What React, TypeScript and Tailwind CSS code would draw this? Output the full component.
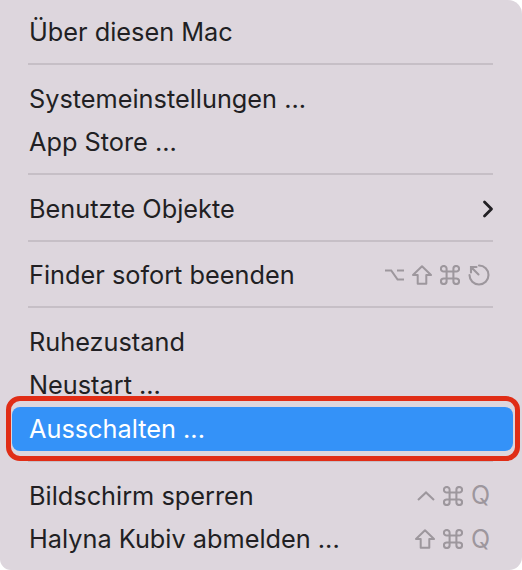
import React from 'react';

const GREY = '#9d979d';

const OptionKey = () => (
  <svg width="19" height="12" viewBox="0 0 19 12" fill="none" stroke={GREY} strokeWidth="2.1">
    <path d="M0 1.5 H6.2 L12.6 10.5 H19 M12 1.5 H19" />
  </svg>
);

const ShiftKey = () => (
  <svg width="20" height="20" viewBox="0 0 20 20" fill="none" stroke={GREY} strokeWidth="2" strokeLinejoin="round">
    <path d="M10 1.2 L19 10 H14.3 V18.8 H5.7 V10 H1 Z" />
  </svg>
);

const CommandKey = () => (
  <svg width="20" height="20" viewBox="1.2 1.2 17.6 17.6" fill="none" stroke={GREY} strokeWidth="1.8">
    <path d="M7 7 V4.5 A2.5 2.5 0 1 0 4.5 7 H15.5 A2.5 2.5 0 1 0 13 4.5 V15.5 A2.5 2.5 0 1 0 15.5 13 H4.5 A2.5 2.5 0 1 0 7 15.5 Z" />
  </svg>
);

const EscapeKey = () => (
  <svg width="22" height="22" viewBox="0 0 22 22" fill="none" stroke={GREY} strokeWidth="2.1" strokeLinecap="round">
    <path d="M11 1.5 A9.5 9.5 0 1 1 1.5 11" />
    <path d="M10.5 10.5 L3 3 M3 8.5 V3 H8.5" />
  </svg>
);

const ControlKey = () => (
  <svg width="18" height="10" viewBox="0 0 18 10" fill="none" stroke={GREY} strokeWidth="2.1">
    <path d="M1 9 L9 1.5 L17 9" />
  </svg>
);

const QKey = () => <span className="text-[25px] leading-none text-[#9d979d]">Q</span>;

const Chevron = () => (
  <svg width="12" height="18" viewBox="0 0 12 18" fill="none" stroke="#222024" strokeWidth="2.8" strokeLinecap="round" strokeLinejoin="round">
    <path d="M2.5 2 L9.5 9 L2.5 16" />
  </svg>
);

const Separator = () => (
  <div className="pt-[9px] pb-[12px] pl-[28px] pr-[29px]">
    <div className="h-[2px] bg-[#c6bfc6]" />
  </div>
);

interface RowProps {
  label: string;
  right?: React.ReactNode;
  active?: boolean;
}

const Row: React.FC<RowProps> = ({ label, right, active }) => {
  if (active) {
    return (
      <div className="relative ml-[12px] mr-[9px] h-[44px] rounded-[8px] bg-[#3492f8] pl-[17px] flex items-center text-white">
        <span>{label}</span>
        <div className="absolute -left-[6px] -right-[7px] -top-[11px] -bottom-[10px] rounded-[14px] border-[5px] border-[#e02d16]" />
      </div>
    );
  }
  return (
    <div className="ml-[12px] mr-[9px] h-[43.5px] pl-[17px] pr-[23px] flex items-center justify-between">
      <span>{label}</span>
      {right}
    </div>
  );
};

export default function App() {
  return (
    <div className="w-[522px] h-[570px] bg-white">
      <div
        className="h-[570px] bg-[#ddd6dd] rounded-tr-[14px] rounded-br-[13px] rounded-bl-[11px] pt-[10.5px] text-[25.3px] text-[#211f23]"
        style={{ fontFamily: 'Inter, "Noto Sans", sans-serif' }}
      >
        <Row label="Über diesen Mac" />
        <Separator />
        <Row label="Systemeinstellungen ..." />
        <Row label="App Store ..." />
        <Separator />
        <Row
          label="Benutzte Objekte"
          right={
            <span className="-mr-[4px]">
              <Chevron />
            </span>
          }
        />
        <Separator />
        <Row
          label="Finder sofort beenden"
          right={
            <div className="flex items-center gap-[8px]">
              <OptionKey />
              <ShiftKey />
              <CommandKey />
              <EscapeKey />
            </div>
          }
        />
        <Separator />
        <Row label="Ruhezustand" />
        <Row label="Neustart ..." />
        <Row label="Ausschalten ..." active />
        <Separator />
        <Row
          label="Bildschirm sperren"
          right={
            <div className="flex items-center gap-[8px]">
              <ControlKey />
              <CommandKey />
              <QKey />
            </div>
          }
        />
        <Row
          label="Halyna Kubiv abmelden ..."
          right={
            <div className="flex items-center gap-[8px]">
              <ShiftKey />
              <CommandKey />
              <QKey />
            </div>
          }
        />
      </div>
    </div>
  );
}
